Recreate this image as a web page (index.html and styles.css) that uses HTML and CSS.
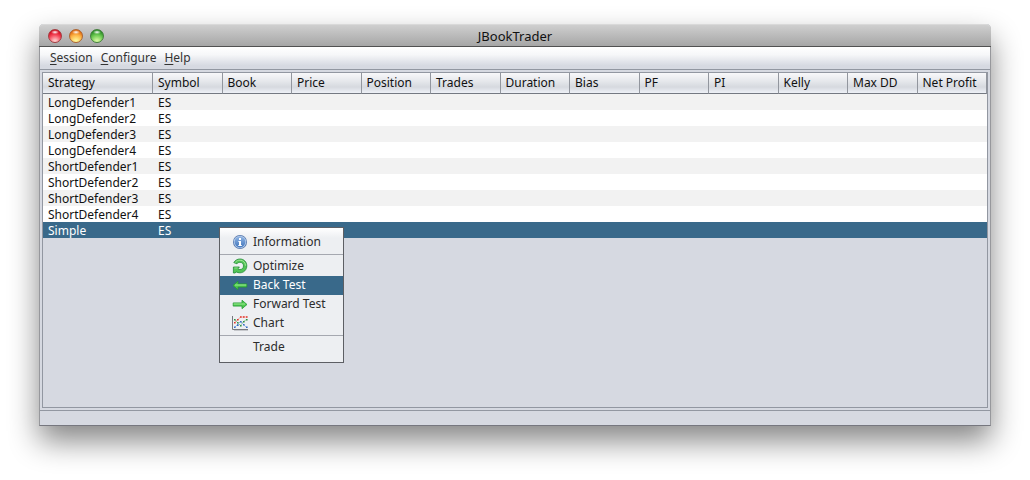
FILE: index.html
```html
<!DOCTYPE html>
<html lang="en">
<head>
<meta charset="utf-8">
<title>JBookTrader</title>
<link rel="stylesheet" href="styles.css">
</head>
<body>
<main class="window">
  <header class="titlebar">
    <div class="lights">
      <button class="light light-close" aria-label="Close"></button>
      <button class="light light-minimize" aria-label="Minimize"></button>
      <button class="light light-zoom" aria-label="Zoom"></button>
    </div>
    <h1 class="title">JBookTrader</h1>
  </header>
  <nav class="menubar">
    <button class="menu"><u>S</u>ession</button>
    <button class="menu"><u>C</u>onfigure</button>
    <button class="menu"><u>H</u>elp</button>
  </nav>
  <section class="content">
    <div class="panel">
      <table class="strategies">
        <thead>
          <tr><th class="col-strategy">Strategy</th><th>Symbol</th><th>Book</th><th>Price</th><th>Position</th><th>Trades</th><th>Duration</th><th>Bias</th><th>PF</th><th>PI</th><th>Kelly</th><th>Max DD</th><th>Net Profit</th></tr>
        </thead>
        <tbody>
          <tr><td>LongDefender1</td><td>ES</td><td colspan="11"></td></tr>
          <tr><td>LongDefender2</td><td>ES</td><td colspan="11"></td></tr>
          <tr><td>LongDefender3</td><td>ES</td><td colspan="11"></td></tr>
          <tr><td>LongDefender4</td><td>ES</td><td colspan="11"></td></tr>
          <tr><td>ShortDefender1</td><td>ES</td><td colspan="11"></td></tr>
          <tr><td>ShortDefender2</td><td>ES</td><td colspan="11"></td></tr>
          <tr><td>ShortDefender3</td><td>ES</td><td colspan="11"></td></tr>
          <tr><td>ShortDefender4</td><td>ES</td><td colspan="11"></td></tr>
          <tr class="selected"><td>Simple</td><td>ES</td><td colspan="11"></td></tr>
        </tbody>
      </table>
      <div class="popup" role="menu">
        <button class="item" role="menuitem">
          <svg class="icon" viewBox="0 0 16 16" aria-hidden="true">
            <defs><linearGradient id="info" x1="0" y1="0" x2="0" y2="1"><stop offset="0" stop-color="#8fb4e3"/><stop offset="1" stop-color="#4377bd"/></linearGradient></defs>
            <circle cx="8" cy="8" r="7" fill="#5577ad"/>
            <circle cx="8" cy="8" r="6.200" fill="#b4cbea"/>
            <circle cx="8" cy="8" r="5.400" fill="url(#info)"/>
            <path d="M7 4h2v2H7zM6.400 7H9v4h.8v1H6.300v-1H7V8h-.6z" fill="#fff"/>
          </svg>Information</button>
        <hr class="divider">
        <button class="item" role="menuitem">
          <svg class="icon" viewBox="0 0 16 16" aria-hidden="true">
            <path d="M1.800 4.600C3.200 2.200 5.400 1 8 1c3.900 0 6.800 3 6.800 6.800 0 4-3 7-6.900 7-1.400 0-2.600-.3-3.700-.9l-1 1.100H1.400V9h6L5.900 10.800c.6.500 1.300.7 2.100.7 2.100 0 3.500-1.500 3.500-3.600S10 4.300 8 4.300c-1.300 0-2.300.5-3 1.500z" fill="#52c456" stroke="#218c35" stroke-width=".8" stroke-linejoin="round"/>
            <path d="M3.300 4.400C4.600 2.800 6.200 2.200 8 2.200c3.200 0 5.500 2.400 5.500 5.500" fill="none" stroke="#a0e796" stroke-width="1"/>
            <path d="M2.300 10h3.500" stroke="#a0e796" stroke-width=".8"/>
          </svg>Optimize</button>
        <button class="item active" role="menuitem">
          <svg class="icon" viewBox="0 0 16 16" aria-hidden="true">
            <path d="M1 8.500 6 4.200v2.700h8.800v3.200H6v2.600z" fill="#4fc94e" stroke="#259b35" stroke-width=".8" stroke-linejoin="round"/>
            <path d="M3 8h11.300" stroke="#9be993" stroke-width="1"/>
          </svg>Back Test</button>
        <button class="item" role="menuitem">
          <svg class="icon" viewBox="0 0 16 16" aria-hidden="true">
            <path d="M15 8.500 10 4.200v2.700H1.200v3.200H10v2.600z" fill="#4fc94e" stroke="#259b35" stroke-width=".8" stroke-linejoin="round"/>
            <path d="M1.700 8H13" stroke="#9be993" stroke-width="1"/>
          </svg>Forward Test</button>
        <button class="item" role="menuitem">
          <svg class="icon" viewBox="0 0 16 16" aria-hidden="true">
            <path d="M.5 1v13.500H16" fill="none" stroke="#77797e"/>
            <path d="M2 15.500h14" stroke="#c6c8cc"/>
            <path d="m2.500 7.500 3-2.500 3-3h6" fill="none" stroke="#f3a29d"/>
            <path d="m2.500 4.500 3 3 3 3 3-4 3-2" fill="none" stroke="#9dc9a0"/>
            <path d="m2.500 12.500 3-3 3-3 3 3 3 3" fill="none" stroke="#9dbce5"/>
            <path d="M2 7h1.600v1.600H2zM5 4h1.600v1.600H5zM8 1.200h1.600v1.600H8zM11 1.200h1.600v1.600H11zM14 1.200h1.600v1.600H14z" fill="#e0382c"/>
            <path d="M2 4h1.600v1.600H2zM5 7h1.600v1.600H5zM8 10h1.600v1.600H8zM11 6h1.600v1.600H11zM14 4h1.600v1.600H14z" fill="#2f9244"/>
            <path d="M2 11.500h1.600v1.600H2zM5 9.300h1.600v1.600H5zM8 6h1.600v1.600H8zM11 9h1.600v1.600H11zM14 11.500h1.600v1.600H14z" fill="#346cc4"/>
          </svg>Chart</button>
        <hr class="divider">
        <button class="item" role="menuitem"><span class="icon"></span>Trade</button>
      </div>
    </div>
  </section>
  <footer class="statusbar"></footer>
</main>
</body>
</html>
```
FILE: styles.css
```css
* { box-sizing: border-box; }

body {
  display: flex;
  min-height: 100vh;
  margin: 0;
  padding: 24px 39px 54px;
  background: #fff;
  color: #111;
  font: 12px/16px "Noto Sans", "Open Sans", sans-serif;
}

button {
  margin: 0;
  padding: 0;
  border: 0;
  background: none;
  color: inherit;
  font: inherit;
}

.window {
  display: flex;
  flex: 1;
  flex-direction: column;
  border: 1px solid #97989c;
  border-top: 0;
  border-bottom-color: #76777f;
  border-radius: 5px 5px 0 0;
  background: #d6d9e1;
  box-shadow: 0 15px 30px rgba(0, 0, 0, 0.48);
}

.titlebar {
  display: grid;
  grid-template-columns: 1fr auto 1fr;
  align-items: center;
  height: 23px;
  margin: 0 -1px;
  padding: 0 9px;
  border-top: 1px solid #d9d9d9;
  border-bottom: 1px solid #515151;
  border-radius: 5px 5px 0 0;
  background: linear-gradient(#cfcfcf, #a6a6a6);
}

.lights { display: flex; gap: 7px; }

.light {
  width: 14px;
  height: 14px;
  border: 1px solid;
  border-radius: 50%;
}

.light-close {
  border-color: #a33c40;
  background: radial-gradient(ellipse 4px 2px at 50% 18%, #fff, transparent), radial-gradient(circle at 50% 95%, #ffc5c5 10%, #f4485a 50%, #d5081d 80%);
}

.light-minimize {
  border-color: #ad6430;
  background: radial-gradient(ellipse 4px 2px at 50% 18%, #fff, transparent), radial-gradient(circle at 50% 95%, #fff493 10%, #fdb446 50%, #e16a0d 80%);
}

.light-zoom {
  border-color: #43803c;
  background: radial-gradient(ellipse 4px 2px at 50% 18%, #fff, transparent), radial-gradient(circle at 50% 95%, #cff79b 10%, #6cc951 50%, #298c24 80%);
}

.title {
  margin: 0;
  font-size: 13px;
  font-weight: 400;
  line-height: 20px;
}

.menubar {
  display: flex;
  gap: 8px;
  height: 23px;
  padding: 0 10px;
  border-bottom: 1px solid #9297a1;
  background: linear-gradient(#fff, #f6f7f9 35%, #d6d9e1 85%);
  color: #333;
}

.menu u { text-underline-offset: 2px; }

.content {
  display: flex;
  flex: 1;
  padding: 2px;
}

.panel {
  position: relative;
  flex: 1;
  border: 1px solid #9297a1;
}

.strategies {
  width: 100%;
  border-collapse: separate;
  border-spacing: 0;
  table-layout: fixed;
}

.col-strategy { width: 110px; }

.strategies th {
  height: 21px;
  padding: 0 0 0 5px;
  border-right: 1px solid #92969e;
  border-bottom: 1px solid #747982;
  background: linear-gradient(#f8f8fa, #e6e8ec 40%, #d6d9df 70%, #eef1f7);
  font-weight: 400;
  line-height: 20px;
  text-align: left;
  white-space: nowrap;
}

.strategies td {
  height: 16px;
  padding: 2px 5px 0;
  background: #fff;
  line-height: 14px;
}

.strategies tbody tr:nth-child(odd) td { background: #f2f2f2; }

.strategies tbody .selected:nth-child(n) td {
  background: #39698a;
  color: #fff;
}

.popup {
  position: absolute;
  top: 154px;
  left: 176px;
  display: flex;
  flex-direction: column;
  width: 125px;
  padding: 5px 0;
  border: 1px solid #5d5f64;
  background: linear-gradient(#fff, #edeff2 10px);
  color: #2c2c2c;
}

.item {
  display: flex;
  align-items: center;
  gap: 5px;
  height: 19px;
  padding: 0 12px 2px;
  white-space: nowrap;
}

.item.active {
  background: #39698a;
  color: #fff;
}

.icon {
  flex: none;
  width: 16px;
  height: 16px;
}

.divider {
  width: 100%;
  margin: 2px 0;
  border: 0;
  border-top: 1px solid #a5a8b0;
}

.statusbar {
  height: 15px;
  border-top: 1px solid #9297a1;
}
```
